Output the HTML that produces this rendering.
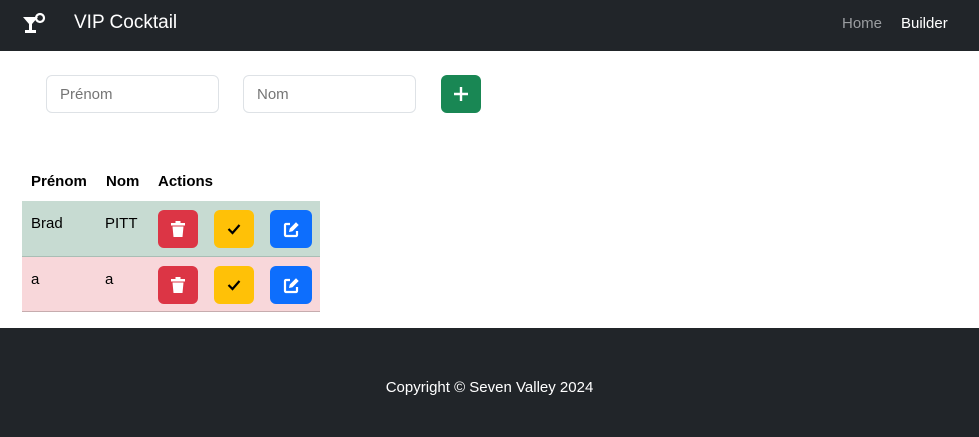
<!DOCTYPE html>
<html><head><meta charset="utf-8"><style>
*{box-sizing:border-box;margin:0;padding:0}
body{width:979px;height:437px;font-family:"Liberation Sans",sans-serif;background:#fff;position:relative;overflow:hidden;font-size:16px;color:#212529}
.nav{position:absolute;left:0;top:0;width:979px;height:51px;background:#212529}
.brand{position:absolute;left:74px;top:12px;color:#fff;font-size:19px}
.nl{position:absolute;top:15px;font-size:15px}
input{position:absolute;top:75px;width:173px;height:38px;border:1px solid #dee2e6;border-radius:6px;font-family:inherit;font-size:15px;padding-left:13px;color:#6c757d}
.add{position:absolute;left:441px;top:75px;width:40px;height:38px;background:#198754;border-radius:6px;display:flex;align-items:center;justify-content:center}
.th{position:absolute;top:173px;font-weight:bold;color:#000;font-size:15px}
.row{position:absolute;left:22px;width:298px}
.td{position:absolute;top:14px;color:#000;font-size:15px}
.b{position:absolute;top:9px;width:40px;height:38px;border-radius:6px;display:flex;align-items:center;justify-content:center}
.foot{position:absolute;left:0;top:328px;width:979px;height:109px;background:#212529;color:#fff;text-align:center;padding-top:51px;font-size:15px}
</style></head><body>
<div class="nav">
<svg style="position:absolute;left:22px;top:12px" width="24" height="24" viewBox="0 0 24 24"><path d="M1 5h15l-6 7v6h4v3H3v-3h4v-6z" fill="#fff"/><circle cx="18" cy="6" r="4" fill="none" stroke="#fff" stroke-width="2.2"/></svg>
<div class="brand">VIP Cocktail</div>
<div class="nl" style="left:842px;color:#9a9da0">Home</div>
<div class="nl" style="left:901px;color:#fff">Builder</div>
</div>
<input style="left:46px" placeholder="Prénom">
<input style="left:243px" placeholder="Nom">
<div class="add"><svg width="14" height="14" viewBox="0 0 14 14"><path d="M7 0v14M0 7h14" stroke="#fff" stroke-width="2.4"/></svg></div>
<div class="th" style="left:31px">Prénom</div>
<div class="th" style="left:106px">Nom</div>
<div class="th" style="left:158px">Actions</div>
<div class="row" style="top:201px;height:56px;background:#c7dbd2;border-bottom:1px solid #a9beb5">
<div class="td" style="left:9px">Brad</div><div class="td" style="left:83px">PITT</div>
<div class="b" style="left:136px;background:#dc3545"><svg width="14" height="16" viewBox="0 0 14 16"><path d="M0 2h14v2.5H0zM4.5 0h5v2h-5zM1.5 5.5h11l-1 10.5h-9z" fill="#fff"/></svg></div>
<div class="b" style="left:192px;background:#ffc107"><svg width="14" height="12" viewBox="0 0 14 12"><path d="M1.5 6l4 4 7-8" fill="none" stroke="#000" stroke-width="2.2"/></svg></div>
<div class="b" style="left:248px;background:#0d6efd;width:42px"><svg width="17" height="17" viewBox="0 0 17 17"><path d="M7 3H3a1 1 0 0 0-1 1v10a1 1 0 0 0 1 1h10a1 1 0 0 0 1-1v-4" fill="none" stroke="#fff" stroke-width="2.2"/><path d="M6 11l.8-3.5L13 1.3l2.7 2.7-6.2 6.2z" fill="#fff"/></svg></div>
</div>
<div class="row" style="top:257px;height:55px;background:#f8d7da;border-bottom:1px solid #c6acae">
<div class="td" style="left:9px">a</div><div class="td" style="left:83px">a</div>
<div class="b" style="left:136px;background:#dc3545"><svg width="14" height="16" viewBox="0 0 14 16"><path d="M0 2h14v2.5H0zM4.5 0h5v2h-5zM1.5 5.5h11l-1 10.5h-9z" fill="#fff"/></svg></div>
<div class="b" style="left:192px;background:#ffc107"><svg width="14" height="12" viewBox="0 0 14 12"><path d="M1.5 6l4 4 7-8" fill="none" stroke="#000" stroke-width="2.2"/></svg></div>
<div class="b" style="left:248px;background:#0d6efd;width:42px"><svg width="17" height="17" viewBox="0 0 17 17"><path d="M7 3H3a1 1 0 0 0-1 1v10a1 1 0 0 0 1 1h10a1 1 0 0 0 1-1v-4" fill="none" stroke="#fff" stroke-width="2.2"/><path d="M6 11l.8-3.5L13 1.3l2.7 2.7-6.2 6.2z" fill="#fff"/></svg></div>
</div>
<div class="foot">Copyright © Seven Valley 2024</div>
</body></html>
